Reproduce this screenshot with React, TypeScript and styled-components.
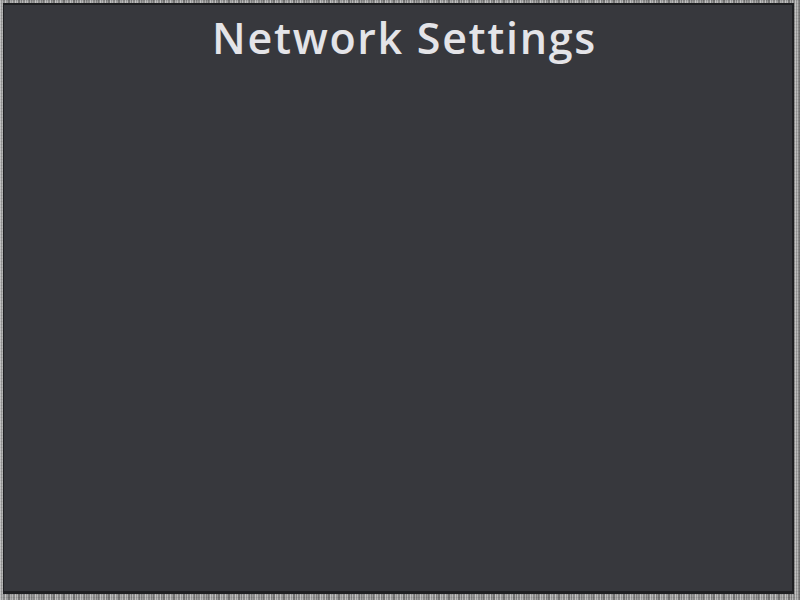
import React from "react";
import styled, { createGlobalStyle } from "styled-components";

const Global = createGlobalStyle`
  html, body { margin: 0; padding: 0; width: 800px; height: 600px; overflow: hidden; }
  body {
    background-color: #a2a2a2;
    background-image:
      repeating-linear-gradient(90deg, rgba(255,255,255,0.22) 0px, rgba(255,255,255,0.22) 1px, rgba(0,0,0,0.14) 1px, rgba(0,0,0,0.14) 2px, rgba(255,255,255,0.06) 2px, rgba(255,255,255,0.06) 3px, rgba(0,0,0,0.22) 3px, rgba(0,0,0,0.22) 5px),
      repeating-linear-gradient(90deg, rgba(255,255,255,0.12) 0px, rgba(255,255,255,0.12) 7px, rgba(0,0,0,0.1) 7px, rgba(0,0,0,0.1) 11px),
      repeating-linear-gradient(0deg, rgba(255,255,255,0.06) 0px, rgba(255,255,255,0.06) 2px, rgba(0,0,0,0.06) 2px, rgba(0,0,0,0.06) 3px);
  }
`;

const Frame = styled.div`
  box-sizing: border-box;
  width: 800px;
  height: 600px;
  padding: 3px 6px 6px 3px;
  display: flex;
`;

const Panel = styled.main`
  flex: 1;
  box-sizing: border-box;
  background: #37383d;
  border-top: 2px solid #1e1f22;
  border-left: 1px solid #1e1f22;
  border-right: 2px solid #1e1f22;
  border-bottom: 3px solid #1e1f22;
  display: flex;
  flex-direction: column;
  align-items: center;
`;

const Title = styled.h1`
  margin: 11px 0 0 13px;
  font-family: "Open Sans", "Noto Sans", sans-serif;
  font-weight: 600;
  font-size: 43px;
  line-height: 43px;
  letter-spacing: 1.7px;
  color: #e4e4e8;
`;

export default function App() {
  return (
    <>
      <Global />
      <Frame>
        <Panel>
          <Title>Network Settings</Title>
        </Panel>
      </Frame>
    </>
  );
}
